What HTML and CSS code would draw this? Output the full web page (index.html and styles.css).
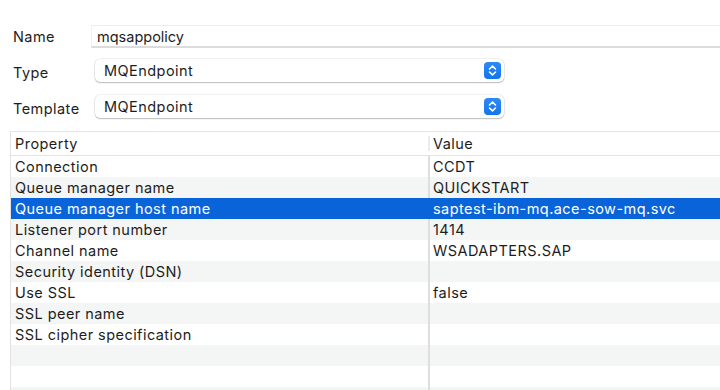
FILE: index.html
```html
<!DOCTYPE html>
<html lang="en">
<head>
  <meta charset="UTF-8">
  <title>Policy</title>
  <link rel="stylesheet" href="styles.css">
</head>
<body>
  <div class="form">
    <div class="row row-name">
      <label class="label">Name</label>
      <input class="field" type="text" value="mqsappolicy">
    </div>
    <div class="row">
      <label class="label">Type</label>
      <div class="select">
        <span class="select-text">MQEndpoint</span>
        <i class="stepper">
          <svg width="17" height="17" viewBox="0 0 17 17"><path d="M5.5 7 L8.5 4.2 L11.5 7 M5.5 10 L8.5 12.8 L11.5 10" fill="none" stroke="#fff" stroke-width="1.6" stroke-linecap="round" stroke-linejoin="round"/></svg>
        </i>
      </div>
    </div>
    <div class="row">
      <label class="label">Template</label>
      <div class="select">
        <span class="select-text">MQEndpoint</span>
        <i class="stepper">
          <svg width="17" height="17" viewBox="0 0 17 17"><path d="M5.5 7 L8.5 4.2 L11.5 7 M5.5 10 L8.5 12.8 L11.5 10" fill="none" stroke="#fff" stroke-width="1.6" stroke-linecap="round" stroke-linejoin="round"/></svg>
        </i>
      </div>
    </div>
  </div>

  <div class="table">
    <div class="thead">
      <div class="cell">Property</div>
      <div class="cell value">Value</div>
    </div>
    <div class="tr"><div class="cell">Connection</div><div class="cell value">CCDT</div></div>
    <div class="tr"><div class="cell">Queue manager name</div><div class="cell value">QUICKSTART</div></div>
    <div class="tr selected"><div class="cell">Queue manager host name</div><div class="cell value">saptest-ibm-mq.ace-sow-mq.svc</div></div>
    <div class="tr"><div class="cell">Listener port number</div><div class="cell value">1414</div></div>
    <div class="tr"><div class="cell">Channel name</div><div class="cell value">WSADAPTERS.SAP</div></div>
    <div class="tr"><div class="cell">Security identity (DSN)</div><div class="cell value"></div></div>
    <div class="tr"><div class="cell">Use SSL</div><div class="cell value">false</div></div>
    <div class="tr"><div class="cell">SSL peer name</div><div class="cell value"></div></div>
    <div class="tr"><div class="cell">SSL cipher specification</div><div class="cell value"></div></div>
    <div class="tr"><div class="cell"></div><div class="cell value"></div></div>
    <div class="tr"><div class="cell"></div><div class="cell value"></div></div>
    <div class="tr"><div class="cell"></div><div class="cell value"></div></div>
  </div>
</body>
</html>
```

FILE: styles.css
```css
body {
  margin: 0;
  height: 390px;
  background: #fff;
  font-family: "Inter", "Liberation Sans", sans-serif;
  font-size: 14.5px;
  letter-spacing: 0.45px;
  color: #1d1d1d;
  overflow: hidden;
}

.form {
  padding: 25px 0 0 13px;
}

.row {
  display: flex;
  align-items: center;
  height: 23px;
  margin-bottom: 13px;
}

.row-name {
  margin-bottom: 11px;
}

.label {
  width: 82px;
  flex: none;
  padding-top: 3px;
}

.row-name .label {
  width: 78px;
  padding-top: 0;
}

.field {
  flex: 1;
  height: 23px;
  box-sizing: border-box;
  margin: 0;
  padding: 0 5px;
  border: none;
  border-top: 1px solid #ececec;
  border-left: 1px solid #f0f0f0;
  border-bottom: 2px solid #dcdcdc;
  font: inherit;
  color: #1d1d1d;
  outline: none;
}

.select {
  width: 409px;
  height: 23px;
  box-sizing: border-box;
  display: flex;
  align-items: center;
  justify-content: space-between;
  padding: 0 3px 0 9px;
  border-radius: 5px;
  background: #fff;
  box-shadow: 0 0 0 0.5px rgba(0, 0, 0, 0.12), 0 1px 1.5px rgba(0, 0, 0, 0.22);
}

.stepper {
  width: 17px;
  height: 17px;
  border-radius: 4px;
  background: linear-gradient(#2d89f6, #1375ec);
  display: flex;
}

.table {
  margin: 1px 0 0 10px;
  height: 258px;
  overflow: hidden;
  border-top: 1px solid #e6e6e6;
  border-left: 1px solid #e2e2e2;
}

.thead,
.tr {
  display: flex;
  height: 21px;
  align-items: center;
}

.thead {
  height: 24px;
  box-sizing: border-box;
  border-bottom: 1px solid #e3e3e3;
}

.cell {
  width: 417px;
  box-sizing: border-box;
  flex: none;
  padding-left: 4px;
  white-space: nowrap;
  align-self: stretch;
  display: flex;
  align-items: center;
}

.cell.value {
  flex: 1;
  border-left: 2px solid #dedede;
  padding-left: 3px;
}

.thead .cell.value {
  border-left-color: #ececec;
  margin: 4px 0;
}

.tr:nth-child(odd) {
  background: #f4f5f5;
}

.tr.selected {
  background: #0a64d9;
  color: #fff;
}

.tr.selected .cell.value {
  border-left-color: #0a64d9;
}
```
